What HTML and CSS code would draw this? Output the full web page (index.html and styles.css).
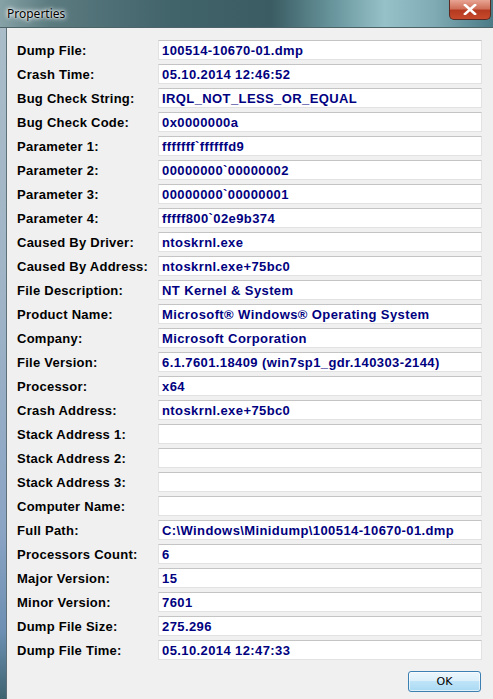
FILE: index.html
```html
<!DOCTYPE html>
<html>
<head>
<meta charset="utf-8">
<link rel="stylesheet" href="styles.css">
</head>
<body>
<div class="window">
  <div class="titlebar">
    <span class="title">Properties</span>
    <div class="close">
      <svg width="14" height="11" viewBox="0 0 14 11"><path d="M2 1 L12 10 M12 1 L2 10" stroke="#fff" stroke-width="2.6" stroke-linecap="square"/></svg>
    </div>
  </div>
  <div class="body">
    <div class="frame-left"></div>
    <div class="content">
      <div class="grid">
        <div class="label">Dump File:</div><div class="field">100514-10670-01.dmp</div>
        <div class="label">Crash Time:</div><div class="field">05.10.2014 12:46:52</div>
        <div class="label">Bug Check String:</div><div class="field">IRQL_NOT_LESS_OR_EQUAL</div>
        <div class="label">Bug Check Code:</div><div class="field">0x0000000a</div>
        <div class="label">Parameter 1:</div><div class="field">fffffff`ffffffd9</div>
        <div class="label">Parameter 2:</div><div class="field">00000000`00000002</div>
        <div class="label">Parameter 3:</div><div class="field">00000000`00000001</div>
        <div class="label">Parameter 4:</div><div class="field">fffff800`02e9b374</div>
        <div class="label">Caused By Driver:</div><div class="field">ntoskrnl.exe</div>
        <div class="label">Caused By Address:</div><div class="field">ntoskrnl.exe+75bc0</div>
        <div class="label">File Description:</div><div class="field">NT Kernel &amp; System</div>
        <div class="label">Product Name:</div><div class="field">Microsoft® Windows® Operating System</div>
        <div class="label">Company:</div><div class="field">Microsoft Corporation</div>
        <div class="label">File Version:</div><div class="field">6.1.7601.18409 (win7sp1_gdr.140303-2144)</div>
        <div class="label">Processor:</div><div class="field">x64</div>
        <div class="label">Crash Address:</div><div class="field">ntoskrnl.exe+75bc0</div>
        <div class="label">Stack Address 1:</div><div class="field"></div>
        <div class="label">Stack Address 2:</div><div class="field"></div>
        <div class="label">Stack Address 3:</div><div class="field"></div>
        <div class="label">Computer Name:</div><div class="field"></div>
        <div class="label">Full Path:</div><div class="field">C:\Windows\Minidump\100514-10670-01.dmp</div>
        <div class="label">Processors Count:</div><div class="field">6</div>
        <div class="label">Major Version:</div><div class="field">15</div>
        <div class="label">Minor Version:</div><div class="field">7601</div>
        <div class="label">Dump File Size:</div><div class="field">275.296</div>
        <div class="label">Dump File Time:</div><div class="field">05.10.2014 12:47:33</div>
      </div>
      <div class="footer">
        <button class="ok">OK</button>
      </div>
    </div>
  </div>
</div>
</body>
</html>
```

FILE: styles.css
```css
html, body {
  margin: 0;
  padding: 0;
  width: 493px;
  height: 699px;
  overflow: hidden;
  background: #f0f0f0;
}
.window {
  width: 493px;
  height: 699px;
  display: flex;
  flex-direction: column;
}
.titlebar {
  position: relative;
  height: 28px;
  flex: none;
  background: linear-gradient(90deg, #86a2a6 0%, #5b7b80 10%, #41636a 35%, #3a5c62 55%, #6a979f 68%, #97c1c9 78%, #80abb4 88%, #4a7b86 100%);
  border-bottom: 1px solid #4c6468;
  box-sizing: border-box;
}
.title {
  position: absolute;
  left: 7px;
  top: 6px;
  font-family: "Noto Sans", "Liberation Sans", sans-serif;
  font-size: 12px;
  line-height: 16px;
  color: #000;
  text-shadow: 0 0 6px #fff, 0 0 4px #fff, 0 0 2px #fff;
}
.close {
  position: absolute;
  left: 449px;
  top: 0;
  width: 42px;
  height: 20px;
  box-sizing: border-box;
  border: 1px solid #5a2a22;
  border-top: none;
  border-radius: 0 0 5px 5px;
  background: linear-gradient(180deg, #e8a493 0%, #d0705a 45%, #b53a20 55%, #c84a2c 100%);
  display: flex;
  align-items: center;
  justify-content: center;
}
.body {
  flex: 1;
  display: flex;
}
.frame-left {
  width: 7px;
  flex: none;
  background: linear-gradient(180deg, #a9bcc8 0%, #9fb4c6 40%, #8aa4c4 75%, #6d8fb2 90%, #3f6470 100%);
  border-right: 1px solid #5d7078;
  box-sizing: border-box;
}
.content {
  flex: 1;
  padding: 12px 11px 0 10px;
}
.grid {
  display: grid;
  grid-template-columns: 141px 324px;
  grid-auto-rows: 20px;
  row-gap: 4px;
}
.label {
  font-family: "Liberation Sans", Arial, sans-serif;
  font-weight: bold;
  font-size: 13px;
  line-height: 21px;
  color: #000;
  letter-spacing: 0.25px;
}
.field {
  background: #fff;
  border: 1px solid #e2e2e2;
  border-top-color: #c4c4c4;
  box-sizing: border-box;
  padding: 1px 3px 0;
  font-family: "Liberation Sans", Arial, sans-serif;
  font-weight: bold;
  font-size: 13px;
  line-height: 18px;
  color: #000080;
  letter-spacing: 0.4px;
  white-space: nowrap;
  overflow: hidden;
}
.footer {
  display: flex;
  justify-content: flex-end;
  margin-top: 11px;
  padding-right: 1px;
}
.ok {
  width: 73px;
  height: 21px;
  box-sizing: border-box;
  border: 1px solid #3c7fb1;
  border-radius: 3px;
  background: linear-gradient(180deg, #ecf6fc 0%, #dcf0fb 45%, #bfe4f8 50%, #a9d9f3 100%);
  box-shadow: inset 0 0 0 1px rgba(255,255,255,0.6);
  font-family: "DejaVu Sans", sans-serif;
  font-size: 11px;
  color: #000;
  padding: 0;
}
```
